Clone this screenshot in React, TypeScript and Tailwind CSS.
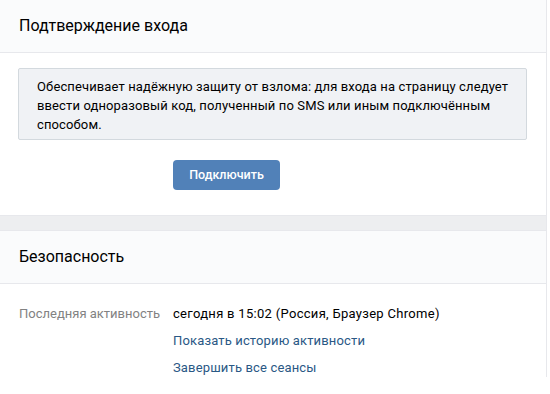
import React from 'react';

const font = { fontFamily: 'Roboto, "Open Sans", sans-serif' };

const Header = ({ title }: { title: string }) => (
  <div className="h-[53px] flex items-center px-[19px] bg-[#fafbfc] border-b border-[#e7e8ec] text-[16px] text-black">
    {title}
  </div>
);

export default function App() {
  return (
    <div className="w-[550px] h-[394px] bg-white overflow-hidden" style={font}>
      <div className="w-[547px] border-r border-[#e7e8ec]">
        <div className="h-[216px] border-b border-[#e7e8ec]">
          <Header title="Подтверждение входа" />
          <div className="pt-[15px] px-[18px]">
            <div className="w-[509px] h-[72px] bg-[#f0f2f5] border border-[#d3d9de] rounded-[2px] pl-[18px] pt-[8px] text-[13px] leading-[19px] tracking-[0.12px] text-black">
              Обеспечивает надёжную защиту от взлома: для входа на страницу следует ввести одноразовый код, полученный по SMS или иным подключённым способом.
            </div>
            <div className="pl-[155px] pt-[20px]">
              <button className="w-[107px] h-[30px] rounded-[4px] bg-[#5181b8] text-white text-[12.5px] font-medium">
                Подключить
              </button>
            </div>
          </div>
        </div>
        <div className="h-[14px] bg-[#edeef0]" />
        <div className="border-t border-[#e7e8ec]">
          <Header title="Безопасность" />
          <div className="pt-[20px] flex text-[13px] leading-[19px] tracking-[0.15px]">
            <div className="w-[173px] pl-[19px] text-[#828282] tracking-normal">Последняя активность</div>
            <div className="flex flex-col gap-[8px]">
              <div className="text-black tracking-[0.3px]">сегодня в 15:02 (Россия, Браузер Chrome)</div>
              <div className="text-[#2a5885]">Показать историю активности</div>
              <div className="text-[#2a5885]">Завершить все сеансы</div>
            </div>
          </div>
        </div>
      </div>
    </div>
  );
}
